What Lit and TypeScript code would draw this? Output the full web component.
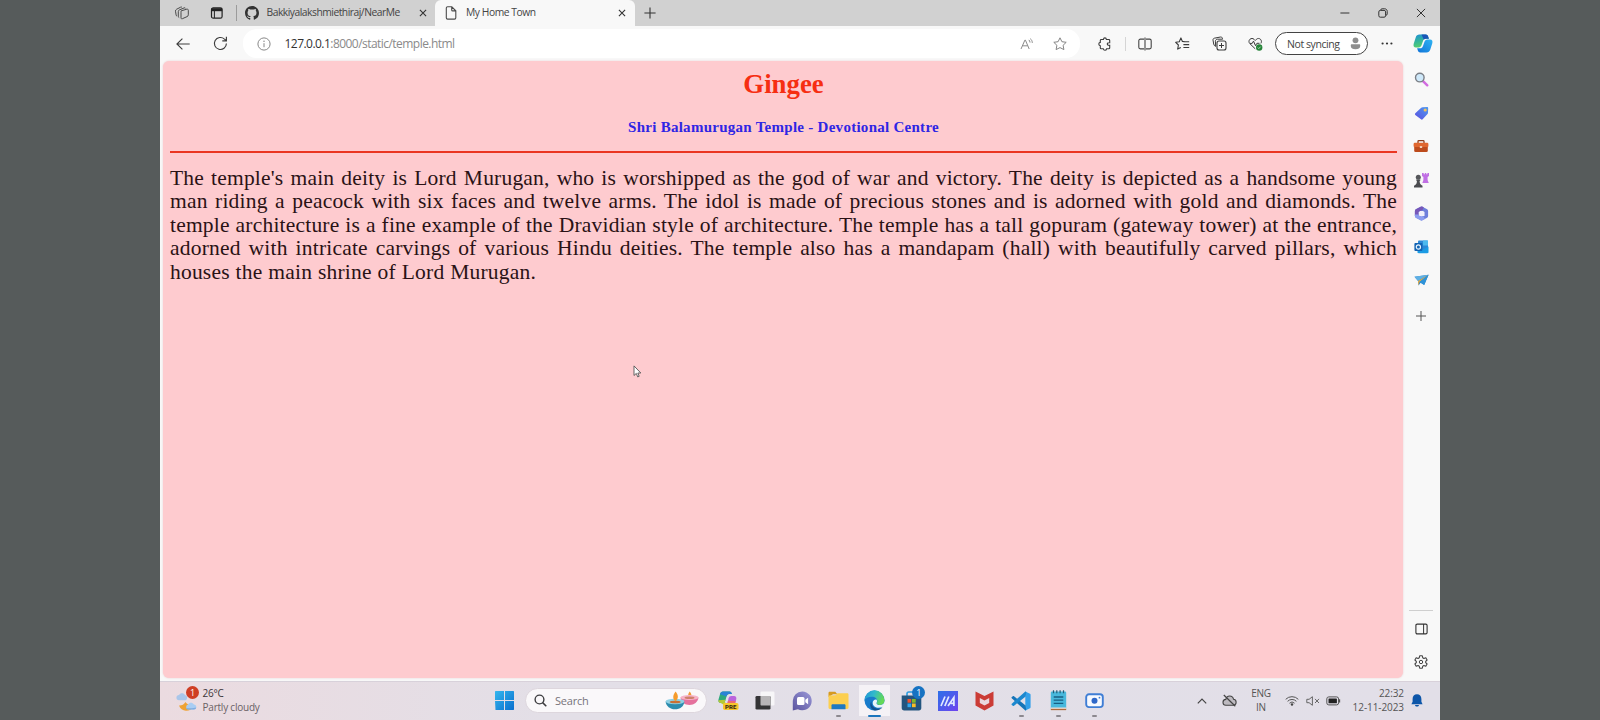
import { LitElement, html, svg, css } from "lit";
import { customElement, property } from "lit/decorators.js";

type Icon = { w: number; h: number; body: unknown };

const icons: Record<string, Icon> = {
  workspaces: { w: 16, h: 16, body: svg`<g fill="none" stroke="#4a4a4a" stroke-width="1"><path d="M7.2 5.8l5.6-1.6c.9-.2 1.5.2 1.5 1v4.6c0 .9-.4 1.5-1.2 1.800l-4.700 2.100c-.8.3-1.400 0-1.400-.9V7.300c0-.8.100-1.300.2-1.500z"/><path d="M5.200 12.600c-.6-.1-.9-.6-.9-1.300V6.600c0-.9.4-1.400 1.100-1.700l4.800-2c.7-.3 1.200-.1 1.400.5"/><path d="M3 11.100c-.5-.1-.8-.5-.9-1.200l-.6-3.700c-.1-.9.300-1.500 1-1.900l4.100-2.100c.6-.3 1.100-.2 1.400.2"/></g>` },
  tabmenu: { w: 14, h: 14, body: svg`<rect x="1.500" y="1.800" width="10.600" height="10.400" rx="1.800" fill="none" stroke="#222" stroke-width="1.200"/><path d="M1.400 2.200h10.800v3H1.400z" fill="#222"/><path d="M4.400 5v7" stroke="#222" stroke-width="1"/>` },
  github: { w: 14, h: 14, body: svg`<path transform="scale(.875)" fill="#333" d="M8 0C3.58 0 0 3.58 0 8c0 3.54 2.29 6.53 5.47 7.59.4.07.55-.17.55-.38 0-.19-.01-.82-.01-1.49-2.01.37-2.53-.49-2.69-.94-.09-.23-.48-.94-.82-1.13-.28-.15-.68-.52-.01-.53.63-.01 1.08.58 1.23.82.72 1.21 1.87.87 2.33.66.07-.52.28-.87.51-1.07-1.78-.2-3.64-.89-3.64-3.95 0-.87.31-1.59.82-2.15-.08-.2-.36-1.02.08-2.12 0 0 .67-.21 2.2.82.64-.18 1.32-.27 2-.27s1.36.09 2 .27c1.53-1.04 2.2-.82 2.2-.82.44 1.1.16 1.92.08 2.12.51.56.82 1.27.82 2.15 0 3.07-1.87 3.75-3.65 3.95.29.25.54.73.54 1.48 0 1.07-.01 1.93-.01 2.2 0 .21.15.46.55.38A8.01 8.01 0 0016 8c0-4.42-3.58-8-8-8z"/>` },
  x: { w: 8, h: 8, body: svg`<path d="M.9.9l6.2 6.2M7.1.9L.9 7.1" stroke="#333" stroke-width="1.1"/>` },
  page: { w: 12, h: 14, body: svg`<path d="M2.6.8h4.2l4 4v7c0 .8-.5 1.3-1.3 1.3H2.6c-.8 0-1.3-.5-1.3-1.3V2.1c0-.8.5-1.3 1.3-1.3zM6.7.9v3c0 .7.3 1 1 1h3" fill="none" stroke="#4b4b4b" stroke-width="1.1"/>` },
  plus: { w: 12, h: 12, body: svg`<path d="M6 .4v11.2M.4 6h11.2" stroke="#333" stroke-width="1.1"/>` },
  plusSmall: { w: 10, h: 10, body: svg`<path d="M5 0v10M0 5h10" stroke="#555" stroke-width="1"/>` },
  min: { w: 10, h: 2, body: svg`<path d="M.4 1h9" stroke="#333" stroke-width="1"/>` },
  restore: { w: 10, h: 10, body: svg`<rect x=".8" y="2.4" width="6.8" height="6.8" rx="1.5" fill="none" stroke="#333"/><path d="M2.6 2.2C2.7 1.3 3.3.8 4.1.8h2.6c1.4 0 2.5 1 2.5 2.5v2.6c0 .8-.5 1.4-1.4 1.5" fill="none" stroke="#333"/>` },
  close: { w: 10, h: 10, body: svg`<path d="M.9.9l8.2 8.2M9.1.9L.9 9.1" stroke="#333" stroke-width="1"/>` },
  back: { w: 14, h: 12, body: svg`<path d="M13.7 6H1M6.4.6L.9 6l5.5 5.4" fill="none" stroke="#3c3c3c" stroke-width="1.1"/>` },
  refresh: { w: 15, h: 15, body: svg`<path d="M13.4 7.5A6 6 0 1 1 11.5 3.1l1.7 1.5M13.4.8v4H9.3" fill="none" stroke="#3c3c3c" stroke-width="1.15"/>` },
  info: { w: 14, h: 14, body: svg`<circle cx="7" cy="7" r="6.1" fill="none" stroke="#888"/><path d="M7 6.2v4" stroke="#888"/><circle cx="7" cy="4.2" r=".75" fill="#888"/>` },
  read: { w: 14, h: 12, body: svg`<path d="M1 11L4.9 2.1h.5L9.2 11M2.5 7.8h5.2M8.8 1.9c.8.6 1.2 1.5 1.2 2.6M10.3.7c1.3 1 2 2.5 2 4.2" fill="none" stroke="#8a8a8a" stroke-width="1"/>` },
  star: { w: 14, h: 14, body: svg`<path d="M7 .8l1.900 3.900 4.300.6-3.100 3 .8 4.300L7 10.600l-3.900 2 .8-4.300-3.100-3 4.300-.6z" fill="none" stroke="#858585" stroke-linejoin="round"/>` },
  puzzle: { w: 14, h: 14, body: svg`<path d="M3.2 2.5h2.2C5.5 1.4 6 .9 6.9.9s1.4.5 1.5 1.6h2.4c.5 0 .9.4.9.9v2.3C10 5.6 9.3 6.1 9.3 7s.7 1.4 2.4 1.4v2.5c0 .5-.4.9-.9.9H8.6c-.2 1-.8 1.4-1.7 1.4s-1.4-.5-1.6-1.4H3.2c-.5 0-.9-.4-.9-.9V8.7C1.2 8.5.8 7.9.8 7s.5-1.5 1.5-1.6v-2c0-.5.4-.9.9-.9z" fill="none" stroke="#3b3b3b" stroke-width="1.1"/>` },
  split: { w: 14, h: 14, body: svg`<path d="M6 2.1H2.4c-.9 0-1.6.7-1.6 1.6v6.6c0 .9.7 1.6 1.6 1.6H6M8 2.1h3.6c.9 0 1.6.7 1.6 1.6v6.6c0 .9-.7 1.6-1.6 1.6H8M7 .6v12.8" fill="none" stroke="#444" stroke-width="1.1"/>` },
  favs: { w: 15, h: 14, body: svg`<path d="M9.4 4.6l-2-.1L5.9.9 4.3 4.7l-3.6.6 2.7 2.7-.7 4.1 3.1-1.7M8.400 4.700h5.800M8.400 7.600h5.800M8.400 10.500h5.800" fill="none" stroke="#3b3b3b" stroke-width="1.1" stroke-linejoin="round"/>` },
  collect: { w: 15, h: 15, body: svg`<rect x="5" y="5" width="9" height="9" rx="2" fill="none" stroke="#3b3b3b" stroke-width="1.1"/><path d="M9.5 7v5M7 9.5h5M3.7 10.4C2.6 10 1.9 9.2 1.7 8L1 4.1c-.1-1 .4-1.7 1.3-1.9L8.5 1c1-.1 1.7.4 1.9 1.3l.2.9H5.5C4.3 3.2 3.4 4 3.4 5.2z" fill="none" stroke="#3b3b3b"/>` },
  heart: { w: 15, h: 14, body: svg`<path d="M7.2 11.8L1.8 6.6C.7 5.4.7 3.4 1.9 2.3c1.2-1.1 3-1.1 4.1 0l1.2 1.2 1.2-1.2c1.1-1.1 3-1.1 4.1 0 1.1 1.2 1.2 2.7.4 4.1M2 6.4h2.2l1.3-2.3 2 4.6 1.4-2.4h2.6" fill="none" stroke="#3b3b3b"/><circle cx="11.2" cy="10.5" r="3.2" fill="#258338"/><path d="M9.8 10.6l1 1 1.9-2" fill="none" stroke="#cfe8cf" stroke-width=".8"/>` },
  person: { w: 11, h: 13, body: svg`<circle cx="5.5" cy="3.3" r="2.9" fill="#8e8e8e"/><path d="M.8 8.2C.8 7.6 1.2 7.2 1.8 7.2h7.4c.6 0 1 .4 1 1v.8c0 2.2-1.900 3.200-4.700 3.200S.8 11.200.8 9z" fill="#8e8e8e"/>` },
  dots: { w: 12, h: 3, body: svg`<g fill="#333"><circle cx="1.600" cy="1.500" r="1.100"/><circle cx="6" cy="1.500" r="1.100"/><circle cx="10.400" cy="1.500" r="1.100"/></g>` },
  copilot: { w: 20, h: 19, body: svg`<defs><linearGradient id="a" x1="0" y1="0" x2=".3" y2="1"><stop stop-color="#1e8fd8"/><stop offset=".55" stop-color="#34b59a"/><stop offset="1" stop-color="#55cf6e"/></linearGradient><linearGradient id="b" x1="1" y1="0" x2="0" y2="1"><stop stop-color="#2fb4f3"/><stop offset="1" stop-color="#1173d8"/></linearGradient></defs><path d="M6.500.6h6.200c1.600 0 2.200 1 2.700 2.700l.5 1.500h-3c-1.600 0-2.400.8-2.900 2.300L8.600 11c-.5 1.500-1.400 2.500-3 2.500H3C.9 13.500.1 12 .7 9.700l2-6.200C3.300 1.500 4.600.6 6.500.6z" fill="url(#a)"/><path d="M13.500 18.400H7.300c-1.600 0-2.200-1-2.700-2.700l-.5-1.500h3c1.600 0 2.400-.8 2.900-2.300l1.400-3.900c.5-1.500 1.400-2.500 3-2.500H17c2.100 0 2.900 1.500 2.300 3.800l-2 6.200c-.6 2-1.900 2.900-3.800 2.900z" fill="url(#b)"/><path d="M12.700.6c1.600 0 2.200 1 2.700 2.700l.5 1.500h-3c-.9 0-1.600.3-2.100.9L8.500.6z" fill="#1a55b8"/>` },
  lens: { w: 15, h: 15, body: svg`<path d="M9.300 9.300l4 4" stroke="#d26be0" stroke-width="2.400" stroke-linecap="round"/><circle cx="5.800" cy="5.600" r="4.300" fill="#cfe9fa" stroke="#7b7f86" stroke-width="1.400"/>` },
  tag: { w: 15, h: 15, body: svg`<defs><linearGradient id="t" x1="1" y1="0" x2="0" y2="1"><stop stop-color="#4e9bf0"/><stop offset="1" stop-color="#5c4ee0"/></linearGradient></defs><path d="M8.500 1.200l4.500-.1c.8 0 1.200.4 1.200 1.200l-.2 4.500c0 .5-.2.9-.5 1.300l-4.800 5.100c-.5.5-1.200.6-1.700.1L1.300 8.900c-.5-.5-.5-1.200 0-1.700l5.900-5.500c.4-.3.8-.5 1.300-.5z" fill="url(#t)"/><circle cx="11.200" cy="4" r="1.600" fill="#f2c15f"/>` },
  toolbox: { w: 16, h: 13, body: svg`<path d="M5 3V1.500C5 .9 5.300.7 5.800.7h4.400c.5 0 .8.2.8.8V3" fill="none" stroke="#8f3d1c" stroke-width="1.300"/><rect x=".6" y="2.700" width="14.800" height="4.600" rx="1.300" fill="#e0672f"/><path d="M1.200 7h13.600v3.700c0 .8-.5 1.200-1.200 1.200H2.400c-.7 0-1.200-.4-1.200-1.200z" fill="#bd4b1c"/><rect x="6.800" y="5.900" width="2.400" height="2.200" rx=".7" fill="#f3d3ba"/>` },
  chess: { w: 16, h: 16, body: svg`<path d="M9 1h1.700v1.300h1.100V1h1.500v1.300h1.100V1H16v3l-1.400 1v3l1.200 3H9.300l1.100-3V5L9 4z" fill="#c070e4"/><circle cx="5.300" cy="5.300" r="2.500" fill="#56575b"/><path d="M3.300 7.400h4v1l-.7.5c.1 2 .6 3 1.700 4l1.200.8v1.700H1v-1.700l1.200-.8c1.200-1 1.700-2 1.700-4l-.6-.5z" fill="#4b4c50"/>` },
  m365: { w: 15, h: 15, body: svg`<path d="M7.500 2.200L2.700 4.900v5.200l4.800 2.700 4.800-2.700V4.900z" fill="none" stroke="#6f7fdb" stroke-width="3.600" stroke-linejoin="round"/><path d="M2.700 10.100V4.900l4.800-2.700 1.500.8" fill="none" stroke="#7757b8" stroke-width="3.600" stroke-linejoin="round"/><path d="M2.700 8.500v1.600l4.800 2.700 2.500-1.400" fill="none" stroke="#8c9df0" stroke-width="3.600" stroke-linejoin="round"/><circle cx="7.500" cy="7.500" r="2.500" fill="#f1f0fb"/>` },
  outlook: { w: 15, h: 14, body: svg`<rect x="4" y=".5" width="10" height="11" rx="1" fill="#2c87d6"/><path d="M9 .5h5v5H9z" fill="#4cb9ee"/><path d="M3.500 6.500l5.500 3 5.500-3V12c0 .8-.4 1.200-1.200 1.200H4.700c-.8 0-1.200-.4-1.200-1.200z" fill="#1b9be4"/><rect x=".4" y="3" width="8" height="8" rx="1" fill="#1263b3"/><circle cx="4.400" cy="7" r="2.100" fill="none" stroke="#e4f2fc" stroke-width="1.200"/>` },
  plane: { w: 15, h: 13, body: svg`<path d="M.5 2.800L14.600.7 10.200 11 6.700 8.800 4.500 11.500 4 7z" fill="#2c86cf"/><path d="M.5 2.800L14.600.7 4 7z" fill="#5fb0e4"/><path d="M4 7L14.600.7 5.500 8l-1 3.500z" fill="#e7aa3e"/><path d="M5.500 8L14.600.7 10.200 11z" fill="#2f93d8"/>` },
  panel: { w: 13, h: 12, body: svg`<rect x=".9" y="1.100" width="11.200" height="9.800" rx="1.300" fill="none" stroke="#333" stroke-width="1.100"/><path d="M8.600 1v10" stroke="#333"/>` },
  gear: { w: 16, h: 16, body: svg`<path d="M6.700 1.100h2.600l.4 1.900 1.200.7 1.900-.7 1.300 2.300-1.400 1.300v1.400l1.400 1.300-1.300 2.300-1.900-.7-1.200.7-.4 1.900H6.700l-.4-1.900-1.200-.7-1.900.7-1.300-2.300L3.300 8V6.600L1.900 5.300 3.200 3l1.900.7L6.300 3z" transform="translate(0 .7)" fill="none" stroke="#444" stroke-width="1.100" stroke-linejoin="round"/><circle cx="8" cy="8" r="1.700" fill="none" stroke="#444"/>` },
  weather: { w: 22, h: 22, body: svg`<path d="M3 15.500c2.500.2 5-.8 6.500-3.500.8 2 3.500 3 8 4.500-1.300 3-4 4.200-7.500 4.200-3.300 0-5.800-2-7-5.200z" fill="#efa233"/><path d="M3 10.200a2.600 2.600 0 0 1 .1-5.200C4 2.800 8 2.700 9 5.200c2.500-.4 3 4.600.4 5z" fill="#a9c6ea"/><path d="M12 19.600a2.700 2.700 0 0 1 .2-5.200c1-2.300 4.600-2.200 5.600.2 3.300.1 3.200 4.900.2 5z" fill="#a8cdf3"/><path d="M12 19.600h6c1.300 0 2-.9 2.200-2-2 .7-7.500 1-10 .3.300 1 1 1.700 1.800 1.700z" fill="#7facdf"/>` },
  windows: { w: 19, h: 19, body: svg`<defs><linearGradient id="w" x1="0" y1="0" x2="1" y2="1"><stop stop-color="#34b7ee"/><stop offset="1" stop-color="#0a6fce"/></linearGradient></defs><path d="M.5 0H9v9H0V.5zM10 0h8.500l.5.5V9h-9zM0 10h9v9H.5zM10 10h9v8.500l-.5.5H10z" fill="url(#w)"/>` },
  search: { w: 13, h: 13, body: svg`<circle cx="5.500" cy="5.500" r="4.400" fill="none" stroke="#3d3d40" stroke-width="1.400"/><path d="M8.600 8.600l3.700 3.700" stroke="#3d3d40" stroke-width="1.500"/>` },
  diyas: { w: 34, h: 19, body: svg`<path d="M24.700.5c2 2.500 2.500 4.700 0 5.700-2.300-1-1.800-3.200 0-5.700z" fill="#f39a35"/><path d="M15.500 6.500c.7 4.800 4.300 7.500 9 7.500s8.500-3 9-7.500z" fill="#e5719d"/><ellipse cx="24.500" cy="6.500" rx="9" ry="2.500" fill="#f6b3c8"/><ellipse cx="24.500" cy="6.800" rx="5" ry="1.200" fill="#cf7f6c"/><path d="M.6 10.500c.5 4.800 4.500 7.800 9.400 7.800s9-2.800 9.400-7.800z" fill="#2c8cae"/><ellipse cx="10" cy="10.500" rx="9.400" ry="2.700" fill="#8fd0e4"/><ellipse cx="10.200" cy="11" rx="5.500" ry="1.300" fill="#c86f34"/><path d="M10.500.5c3 3.500 3.300 7 0 9.700-3.200-2.200-2.800-6 0-9.700z" fill="#f59b2b"/>` },
  copilotPre: { w: 21, h: 19, body: svg`<path d="M5 .5h6.500c1.500 0 2 1 2.400 2.600H11c-1.500 0-2 1-2.500 2.400L7.300 9.800c-.5 1.600-1.300 2.200-2.700 2.200H2.800C1 12 0 10.800.5 8.600L2 3.200C2.500 1.300 3.500.5 5 .5z" fill="#2ea97c"/><path d="M5 .5h6.500c1.500 0 2 1 2.400 2.600H11c-1.500 0-2 1-2.500 2.400L2 3.200C2.500 1.300 3.500.5 5 .5z" fill="#2a83d5"/><path d="M.3 9.300l7.200-.5-.7 2.300L9.300 14H6l-3.200-2C1.300 12 .4 11 .3 9.300z" fill="#b6c936"/><path d="M13.300 5H16c2 0 2.700 1.400 2.200 3.500L16.700 14H9l1.600-6.800C11 5.700 11.900 5 13.300 5z" fill="#ba64dc"/><path d="M10 9.800l7.700.3L16.700 14H9z" fill="#ec6a72"/><rect x="5" y="12" width="15.500" height="7" rx="1.700" fill="#f8c62c"/><text x="12.700" y="17.700" text-anchor="middle" font-family="Roboto, sans-serif" font-size="6" font-weight="900" fill="#3b2b10">PRE</text>` },
  taskview: { w: 20, h: 19, body: svg`<rect x="5.500" y=".5" width="14" height="14" rx="1.300" fill="#f7f6f8"/><rect x=".5" y="5" width="15" height="13.500" rx="1.300" fill="#343436"/><path d="M5.500 5h10v9.500h-9c-.6 0-1-.4-1-1z" fill="#b7b5b7"/>` },
  chat: { w: 20, h: 20, body: svg`<defs><linearGradient id="c" x1="1" y1="0" x2="0" y2="1"><stop stop-color="#9a98d8"/><stop offset="1" stop-color="#5c559f"/></linearGradient></defs><path d="M10.300.5a9.400 9.400 0 1 1-4.400 17.700l-5.100 1.200V9.800A9.400 9.400 0 0 1 10.300.5z" fill="url(#c)"/><rect x="5" y="6" width="7.500" height="8" rx="1.500" fill="#fff"/><path d="M13.300 8.700l2.800-1.900v6.400l-2.800-1.900z" fill="#fff"/>` },
  folder: { w: 21, h: 19, body: svg`<path d="M.5 2c0-.8.5-1.300 1.300-1.300h5.500l2 2.600H5L.5 6z" fill="#d69a20"/><path d="M.5 4.500l7-.3 2-1.900h9.700c.8 0 1.300.5 1.300 1.300v13c0 .8-.5 1.300-1.300 1.300H1.800c-.8 0-1.300-.5-1.300-1.300z" fill="#fccf50"/><path d="M3.500 14.500c0-.8.5-1.200 1.200-1.200h11.600c.7 0 1.200.4 1.200 1.200v3.800h-14z" fill="#1e79c2"/>` },
  edge: { w: 21, h: 21, body: svg`<defs><linearGradient id="e" x1="0" y1="0" x2="1" y2=".3"><stop stop-color="#2092d8"/><stop offset=".5" stop-color="#31b9cb"/><stop offset="1" stop-color="#64d957"/></linearGradient></defs><circle cx="10.500" cy="10.500" r="10" fill="#187bcb"/><path d="M.5 10.500a10 10 0 0 1 20-.3c0 3-2 4.800-4.700 4.800-2 0-3.300-.8-3.300-1.700 0-.7.8-1 .8-2.300 0-2.200-2.200-4.200-5.300-4.200C4 6.800 1.200 8.200.5 10.500z" fill="url(#e)"/><path d="M7.500 11.600c-.7 4 2.800 7.300 6.700 7.100 2 0 3.300-.8 4.300-1.500-1.700 2.300-4.600 3.400-7.600 3.300C6.500 20 5 14 7.500 11.600z" fill="#12518f"/><path d="M12.400 9.600c1.200 1.500.4 2.600.1 3.300-.4 1 1.200 2.100 3.300 2.100 1.800 0 3.200-.6 4.700-2.600 0 2.100-1.200 3.600-2.200 4.600-3.700 1.800-9.600.7-9.600-4.200 0-2 1.800-3.600 3.700-3.200z" fill="#e9f4fa"/>` },
  store: { w: 21, h: 20, body: svg`<path d="M6 5V2.700C6 1.500 6.600 1 7.700 1h5.600c1.100 0 1.700.5 1.700 1.700V5" fill="none" stroke="#2a9be0" stroke-width="1.600"/><path d="M.7 4.500h19.600V17c0 1.500-.9 2.500-2.500 2.500H3.200C1.600 19.500.7 18.500.7 17z" fill="#23557f"/><path d="M6.500 8h3.700v3.700H6.500z" fill="#f0512c"/><path d="M11 8h3.700v3.700H11z" fill="#80ba2b"/><path d="M6.500 12.500h3.700v3.700H6.500z" fill="#31a7ee"/><path d="M11 12.500h3.700v3.700H11z" fill="#fabd25"/>` },
  myasus: { w: 20, h: 20, body: svg`<defs><linearGradient id="m" x1="0" y1="0" x2="1" y2="1"><stop stop-color="#2c70e8"/><stop offset="1" stop-color="#7044ef"/></linearGradient></defs><path d="M0 0h20v20H0z" fill="url(#m)"/><path d="M3 15L7 5.500M6.800 15L10.800 5.500M10 15l5.900-8.500V15M12.700 12.400h3" fill="none" stroke="#e2eaff" stroke-width="1.700"/>` },
  mcafee: { w: 19, h: 20, body: svg`<path d="M.5.500L9.500 5l9-4.500v14l-9 5-9-5z" fill="#cb3c36"/><path d="M4.800 7l4.700 2.500L14.200 7v5l-4.700 2.500L4.800 12z" fill="#ead9de"/>` },
  vscode: { w: 20, h: 20, body: svg`<path d="M14.300.4L19 2.700c.4.2.6.5.6 1v12.600c0 .5-.2.8-.6 1l-4.700 2.300z" fill="#34a0e9"/><path d="M14.600 14.500L3 5.200c-.4-.3-.8-.3-1.200 0l-1 .9c-.4.4-.4.8 0 1.200l13.500 12.300.9-.4z" fill="#1675b8"/><path d="M14.600 5.500L3 14.800c-.4.3-.8.3-1.200 0l-1-.9c-.4-.4-.4-.8 0-1.200L14.300.4l1 .5z" fill="#1c88cf"/>` },
  notepad: { w: 17, h: 21, body: svg`<rect x=".8" y="1.500" width="15.400" height="18" rx="1.200" fill="#48b8dc"/><path d="M.8 17.500h15.400V19H.8z" fill="#eadfd8"/><path d="M.8 19.500h15.400" stroke="#b06a3b" stroke-width="1.300"/><path d="M3.500.3v3M6.800.3v3M10.100.3v3M13.500.3v3" stroke="#245d78" stroke-width="1.200"/><path d="M3.700 7h9.600M3.700 10.200h9.600M3.700 13.400h9.600" stroke="#185f83" stroke-width="1.300"/>` },
  camera: { w: 19, h: 16, body: svg`<rect x="1.200" y="1.300" width="16.600" height="12.800" rx="2.800" fill="#f7faff" stroke="#3f7ed5" stroke-width="1.900"/><circle cx="9.500" cy="7.700" r="3" fill="#2f68c9"/><circle cx="14.500" cy="4.700" r=".9" fill="#3f7ed5"/>` },
  up: { w: 10, h: 6, body: svg`<path d="M.8 5.300L5 1l4.200 4.300" fill="none" stroke="#444" stroke-width="1.200"/>` },
  cloud: { w: 15, h: 13, body: svg`<path d="M4 11.200a2.900 2.900 0 0 1-.2-5.800C4.300 3 5.800 2 7.700 2s3.400 1.300 3.800 3.200c3.500.1 3.500 5.800 0 6z" fill="#bdbac0" stroke="#444" stroke-width="1.100"/><path d="M1.800 1l11.500 11.200" stroke="#444" stroke-width="1.200"/>` },
  wifi: { w: 14, h: 11, body: svg`<g fill="none" stroke="#555" stroke-width="1"><path d="M.7 4.300a8.900 8.900 0 0 1 12.600 0M2.600 6.300a6.200 6.200 0 0 1 8.800 0M4.500 8.200a3.500 3.500 0 0 1 5 0"/></g><circle cx="7" cy="9.500" r="1.200" fill="#444"/>` },
  mute: { w: 14, h: 10, body: svg`<path d="M.8 3.300h2.300L6.400.7v8.600L3.100 6.700H.8zM9 2.900l4 4.100M13 2.900L9 7" fill="none" stroke="#666"/>` },
  battery: { w: 15, h: 10, body: svg`<rect x=".8" y=".9" width="11.800" height="8" rx="2" fill="none" stroke="#555"/><rect x="2.500" y="2.500" width="8.400" height="4.800" rx=".6" fill="#222"/><path d="M13.500 3.300v3.200" stroke="#555" stroke-width="1.300"/>` },
  bell: { w: 12, h: 13, body: svg`<path d="M6 .3c2.700 0 4.400 1.900 4.400 4.600v2.800l1.200 2.500H.4l1.200-2.500V4.900C1.600 2.200 3.300.3 6 .3zM4 10.900h4c-.2 1-.9 1.600-2 1.600s-1.800-.6-2-1.600z" fill="#0d56a9"/>` },
  pointer: { w: 9, h: 13, body: svg`<path d="M1 .9v9.600l2.300-2.100 1.400 3.500 1.500-.6-1.400-3.300h3z" fill="#fff" stroke="#555" stroke-width=".9"/>` },
};

@customElement("ui-icon")
class UiIcon extends LitElement {
  @property() name = "x";
  static styles = css`
    :host { display: inline-flex; flex: none; }
    svg { display: block; overflow: visible; }
  `;
  render() {
    const i = icons[this.name];
    return html`<svg width=${i.w} height=${i.h} viewBox="0 0 ${i.w} ${i.h}">${i.body}</svg>`;
  }
}

const cell = (name: string) => html`<div class="cell"><ui-icon name=${name}></ui-icon></div>`;

const lines = [
  "The temple's main deity is Lord Murugan, who is worshipped as the god of war and victory. The deity is depicted as a handsome young",
  "man riding a peacock with six faces and twelve arms. The idol is made of precious stones and is adorned with gold and diamonds. The",
  "temple architecture is a fine example of the Dravidian style of architecture. The temple has a tall gopuram (gateway tower) at the entrance,",
  "adorned with intricate carvings of various Hindu deities. The temple also has a mandapam (hall) with beautifully carved pillars, which",
  "houses the main shrine of Lord Murugan.",
];

@customElement("app-root")
class AppRoot extends LitElement {
  static styles = css`
    :host { display: flex; justify-content: center; width: 1600px; height: 720px; overflow: hidden; background: #565b5b; font-family: "Open Sans", "Noto Sans", sans-serif; color: #444; }
    * { box-sizing: border-box; }
    .screen { position: relative; width: 1280px; height: 720px; display: grid; grid-template-rows: 26px 35px 1fr 39px; background: #f8f8f8; }
    .cell { display: flex; align-items: center; justify-content: center; height: 100%; min-width: 0; }
    .tabs { display: grid; grid-template-columns: 44px 26px 13px 18px 151px 22px 1px 200px 29px 1fr 38px 37px 39px; background: #d1d1d1; align-items: center; font-size: 10.3px; line-height: 24px; white-space: nowrap; }
    .tabs .cell, .tabs .title { height: 26px; padding-bottom: 1px; }
    .rule { width: 1px; height: 16px; background: #9b9b9b; }
    .title { padding-left: 5.5px; letter-spacing: -0.45px; }
    .title.inactive { letter-spacing: -0.49px; }
    .active { display: grid; grid-template-columns: 31px 143px 26px; height: 26px; background: #f8f8f8; border-radius: 6px 6px 0 0; }
    .active .title { padding-left: 0; }
    .tools { display: grid; grid-template-columns: 46px 28px 9px 837px 9px 31px 10px 30px 45px 28px 7px 31px 4px 93px 38px 34px; align-items: center; }
    .address { display: grid; grid-template-columns: 41.5px 1fr 32px 33px 4px; height: 29px; border-radius: 14px; background: #fff; align-items: center; font-size: 12px; line-height: 29px; letter-spacing: -0.54px; color: #8a8a8a; }
    .host { color: #333; }
    .tools .rule { background: #d5d5d5; height: 14px; }
    .profile { display: flex; align-items: center; justify-content: space-between; height: 23px; padding: 0 6px 0 11px; border: 1px solid #444; border-radius: 12px; background: #fff; font-size: 10.5px; letter-spacing: -0.42px; white-space: nowrap; }
    .main { display: grid; grid-template-columns: 1240px 1fr; padding: 0 1px 3px 3px; }
    .page { border-radius: 6px; background: #fecbcf; padding: 0 6px 0 7px; box-shadow: 0 0 2px #e9c9cc; font-family: "Liberation Serif", serif; }
    h1 { margin: 7px 0 0; text-align: center; font-size: 26.8px; line-height: 32px; color: #f62e12; }
    h2 { margin: 18px 0 0; text-align: center; font-size: 15px; line-height: 18px; letter-spacing: .27px; color: #2f25e4; }
    .divider { height: 2px; margin: 15px 0 14px; background: #ea3622; }
    .text { font-size: 21.5px; line-height: 23.4px; color: #2a1215; letter-spacing: .2px; }
    .line { display: block; text-align: justify; text-align-last: justify; white-space: nowrap; }
    .line:last-child { width: 366px; }
    .side { display: flex; flex-direction: column; align-items: center; }
    .side .cell { height: 33.5px; }
    .side .add { height: 36px; }
    .side .line-sep { width: 24px; height: 1px; background: #cfcfcf; margin-top: auto; margin-bottom: 1px; }
    .side .low { height: 33px; }
    .side .apps { display: flex; flex-direction: column; width: 100%; padding-top: 2px; }
    .taskbar { display: grid; grid-template-columns: 42.5px 283.500px 36px 3px 182px 3px repeat(11, 36.65px) 1fr 28px 26px 38px 24px 17px 24px 59px 26px 10px; border-top: 1px solid #d8d1da; background: linear-gradient(90deg, #ebdbe0, #e3dfe7 30%, #e2dfe8); align-items: center; font-size: 10px; }
    .weather { padding-left: 16px; position: relative; display: flex; align-items: center; height: 100%; }
    .badge { position: absolute; display: flex; align-items: center; justify-content: center; border-radius: 50%; color: #fff; font-size: 9px; width: 13px; height: 13px; }
    .badge.alert { left: 26px; top: 4px; background: #cf3e24; }
    .badge.count { left: 19px; top: 4px; background: #1672c2; }
    .two { line-height: 13.3px; white-space: nowrap; letter-spacing: -0.22px; color: #6a6266; padding-bottom: 1px; }
    .temp { color: #3b3538; }
    .search { display: grid; grid-template-columns: 29px 1fr 49px; align-items: center; height: 25px; border-radius: 13px; background: #faf8fa; border: 1px solid #ddd6dd; font-size: 11px; letter-spacing: -0.2px; color: #77737a; line-height: 23px; }
    .taskbar > .cell, .search, .app { margin-bottom: 1px; }
    .app { position: relative; display: flex; justify-content: center; align-items: center; height: 37px; }
    .app.current { background: linear-gradient(#f5f2f6, #f5f2f6) center / 31px 31px no-repeat; }
    .dot { position: absolute; bottom: 2px; width: 5px; height: 2px; border-radius: 1px; background: #8c898f; }
    .current .dot { width: 13px; background: #1b75bd; }
    .lang { text-align: center; color: #555; }
    .clock { text-align: right; color: #555; letter-spacing: -0.08px; }
    .cursor { position: absolute; left: 472.5px; top: 365px; margin-top: -4px; }
  `;

  private app(name: string, kind = "") {
    return html`<div class="app ${kind === "current" ? "current" : ""}">
      <ui-icon name=${name}></ui-icon>
      ${kind === "count" ? html`<span class="badge count">1</span>` : ""}
      ${kind === "open" || kind === "current" ? html`<span class="dot"></span>` : ""}
    </div>`;
  }

  render() {
    return html`<div class="screen">
      <div class="tabs">
        ${cell("workspaces")}${cell("tabmenu")}
        <div class="cell"><div class="rule"></div></div>
        ${cell("github")}
        <div class="title inactive">Bakkiyalakshmiethiraj/NearMe</div>
        ${cell("x")}<div></div>
        <div class="active">${cell("page")}<div class="title">My Home Town</div>${cell("x")}</div>
        ${cell("plus")}<div></div>${cell("min")}${cell("restore")}${cell("close")}
      </div>
      <div class="tools">
        ${cell("back")}${cell("refresh")}<div></div>
        <div class="address">${cell("info")}<div><span class="host">127.0.0.1</span>:8000/static/temple.html</div>${cell("read")}${cell("star")}</div>
        <div></div>${cell("puzzle")}
        <div class="cell"><div class="rule"></div></div>
        ${cell("split")}${cell("favs")}${cell("collect")}<div></div>${cell("heart")}<div></div>
        <div class="profile"><span>Not syncing</span><ui-icon name="person"></ui-icon></div>
        ${cell("dots")}${cell("copilot")}
      </div>
      <div class="main">
        <div class="page">
          <h1>Gingee</h1>
          <h2>Shri Balamurugan Temple - Devotional Centre</h2>
          <div class="divider"></div>
          <div class="text">${lines.map((l) => html`<span class="line">${l}</span>`)}</div>
        </div>
        <div class="side">
          <div class="apps">${["lens", "tag", "toolbox", "chess", "m365", "outlook", "plane"].map(cell)}</div>
          <div class="cell add"><ui-icon name="plusSmall"></ui-icon></div>
          <div class="line-sep"></div>
          <div class="cell low"><ui-icon name="panel"></ui-icon></div>
          <div class="cell low"><ui-icon name="gear"></ui-icon></div>
        </div>
      </div>
      <div class="taskbar">
        <div class="weather"><ui-icon name="weather"></ui-icon><span class="badge alert">1</span></div>
        <div class="two"><div class="temp">26°C</div><div>Partly cloudy</div></div>
        ${cell("windows")}<div></div>
        <div class="search">${cell("search")}<span>Search</span>${cell("diyas")}</div>
        <div></div>
        ${this.app("copilotPre")}${this.app("taskview")}${this.app("chat")}${this.app("folder", "open")}${this.app("edge", "current")}${this.app("store", "count")}${this.app("myasus")}${this.app("mcafee")}${this.app("vscode", "open")}${this.app("notepad", "open")}${this.app("camera", "open")}
        <div></div>
        ${cell("up")}${cell("cloud")}
        <div class="two lang"><div>ENG</div><div>IN</div></div>
        ${cell("wifi")}${cell("mute")}${cell("battery")}
        <div class="two clock"><div>22:32</div><div>12-11-2023</div></div>
        ${cell("bell")}<div></div>
      </div>
      <div class="cursor"><ui-icon name="pointer"></ui-icon></div>
    </div>`;
  }
}
